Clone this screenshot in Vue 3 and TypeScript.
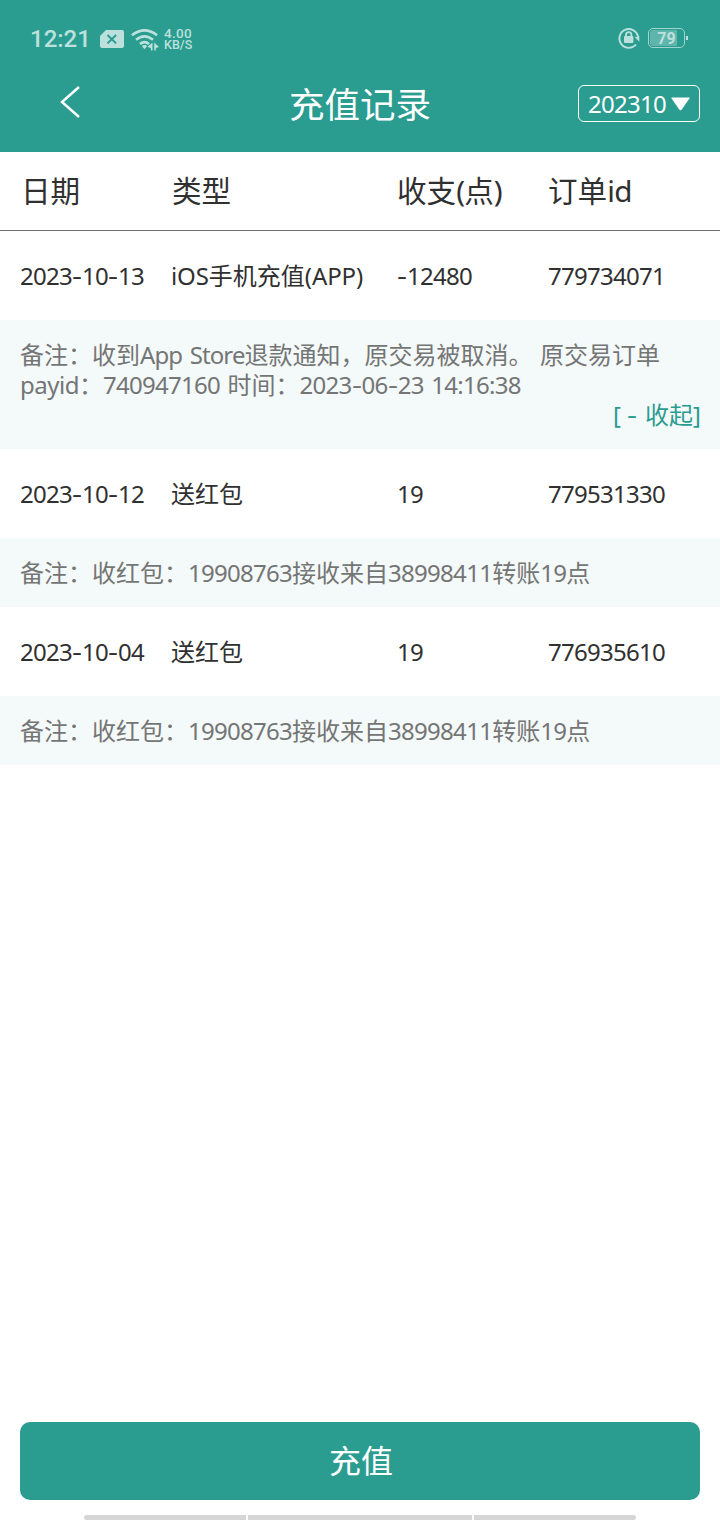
<script setup lang="ts">
import { h, type FunctionalComponent } from 'vue'

interface RecordItem {
  date: string
  type: string
  amount: string
  orderId: string
  note: string
  expanded: boolean
}

const columns: string[] = ['日期', '类型', '收支(点)', '订单id']

const records: RecordItem[] = [
  {
    date: '2023-10-13',
    type: 'iOS手机充值(APP)',
    amount: '-12480',
    orderId: '779734071',
    note: '备注：收到App Store退款通知，原交易被取消。 原交易订单payid：740947160 时间：2023-06-23 14:16:38',
    expanded: true,
  },
  {
    date: '2023-10-12',
    type: '送红包',
    amount: '19',
    orderId: '779531330',
    note: '备注：收红包：19908763接收来自38998411转账19点',
    expanded: false,
  },
  {
    date: '2023-10-04',
    type: '送红包',
    amount: '19',
    orderId: '776935610',
    note: '备注：收红包：19908763接收来自38998411转账19点',
    expanded: false,
  },
]

// Splits mixed text into runs so digits, dashes, Latin and Chinese get their own spacing
const MixedText: FunctionalComponent<{ text: string }> = (props) => {
  const runs = props.text.match(/[0-9:]+|-| +|[A-Za-z()]+|[^\x00-\x7f]+|./g) ?? []
  return runs.map((run) => {
    let kind = 'cjk'
    if (/^[0-9:]/.test(run)) kind = 'num'
    else if (run === '-') kind = 'dash'
    else if (/^ /.test(run)) kind = 'gap'
    else if (/^[a-z]+$/.test(run)) kind = 'lower'
    else if (/^[\x21-\x7e]/.test(run)) kind = 'latin'
    return h('span', { class: `run-${kind}` }, run)
  })
}
MixedText.props = ['text']
</script>

<template>
  <div class="screen">
    <header class="top">
      <div class="status">
        <span class="clock">12:21</span>
        <svg class="sim" width="24" height="18" viewBox="0 0 24 18">
          <path fill="#bce1dc" d="M6 0H22Q24 0 24 2V16Q24 18 22 18H2Q0 18 0 16V6Z" />
          <path d="M7.5 5l8.6 8.4M16.1 5l-8.6 8.4" stroke="#2a9c90" stroke-width="2" fill="none" />
        </svg>
        <svg class="wifi" width="28" height="22" viewBox="0 0 28 22">
          <g fill="none" stroke="#bce1dc" stroke-width="2.7">
            <path d="M1 6.3Q13.5-3.6 26 6.3" />
            <path d="M5 10.8Q13.5 3.9 22 10.8" />
            <path d="M9 15Q13.5 11.2 18 15" />
          </g>
          <path fill="#bce1dc" d="M10.8 17Q13.5 15 16.2 17L13.5 20.3ZM21.5 13.5v8h-1.6v-2.3l-3.4-1.4ZM23.2 13.5l4.8 4.4-3.2 1v2.6h-1.6Z" />
        </svg>
        <span class="speed"><span>4.00</span><span>KB/S</span></span>
        <span class="spacer"></span>
        <svg class="lock" width="22" height="22" viewBox="0 0 22 22">
          <path d="M18 17.5A9.4 9.4 0 1 1 20 9.5" fill="none" stroke="#bce1dc" stroke-width="1.9" />
          <path d="M16.8 10.2L21.3 9v5.8Z" fill="#bce1dc" />
          <rect x="6" y="9" width="9.4" height="7" rx="1" fill="#bce1dc" />
          <path d="M8 10V7.8a2.7 2.7 0 0 1 5.4 0v2.2" fill="none" stroke="#bce1dc" stroke-width="1.8" />
        </svg>
        <span class="battery"><span class="level"></span><span class="percent">79</span></span>
        <span class="terminal"></span>
      </div>
      <nav class="nav">
        <svg class="back" width="22" height="34" viewBox="0 0 22 34">
          <path d="M20 2L3 17L20 32" fill="none" stroke="#fff" stroke-width="2.4" />
        </svg>
        <h1 class="title">充值记录</h1>
        <button class="month" type="button">
          <MixedText text="202310" />
          <svg class="caret" width="19" height="14" viewBox="0 0 19 14"><path d="M1 .5H18Q19 .5 18.4 1.5L10.6 12.7Q9.5 14 8.4 12.7L.6 1.5Q0 .5 1 .5Z" fill="#fff" /></svg>
        </button>
      </nav>
    </header>

    <main class="list">
      <div class="grid head">
        <span v-for="name in columns" :key="name"><MixedText :text="name" /></span>
      </div>
      <section v-for="item in records" :key="item.orderId">
        <div class="grid row">
          <span><MixedText :text="item.date" /></span>
          <span class="kind"><MixedText :text="item.type" /></span>
          <span><MixedText :text="item.amount" /></span>
          <span><MixedText :text="item.orderId" /></span>
        </div>
        <div class="note">
          <p><MixedText :text="item.note" /></p>
          <a v-if="item.expanded" class="fold"><MixedText text="[ - 收起]" /></a>
        </div>
      </section>
    </main>

    <footer class="bottom">
      <button class="recharge" type="button">充值</button>
      <div class="gestures"><i></i><i class="wide"></i><i></i></div>
    </footer>
  </div>
</template>

<style>
body {
  margin: 0;
  background: #fff;
}
.run-num {
  letter-spacing: -0.72px;
}
.run-latin {
  letter-spacing: -0.9px;
}
.run-lower {
  letter-spacing: -0.5px;
}
.kind .run-latin {
  letter-spacing: -0.1px;
}
.run-dash {
  display: inline-block;
  width: 10px;
  text-align: center;
  transform: translateY(-1px) scaleX(1.3);
}
.run-gap {
  word-spacing: 1.3px;
}
</style>

<style scoped>
.screen {
  width: 720px;
  height: 1520px;
  display: flex;
  flex-direction: column;
  overflow: hidden;
  background: #fff;
  color: #303030;
  font-family: "Noto Sans", "Noto Sans CJK SC", sans-serif;
  font-size: 24px;
}
.top {
  height: 152px;
  flex: none;
  background: #2a9c90;
  color: #fff;
}
.status {
  height: 76px;
  padding: 0 32px 0 30px;
  box-sizing: border-box;
  display: flex;
  align-items: center;
  color: #bce1dc;
  font-family: Roboto, sans-serif;
  font-weight: 500;
}
.clock {
  width: 70px;
  line-height: 28px;
  padding-top: 2px;
}
.sim {
  margin-top: 2px;
}
.wifi {
  margin: 3px 0 0 7px;
}
.speed {
  margin: 2px 0 0 5px;
  display: flex;
  flex-direction: column;
  font-size: 13.5px;
  line-height: 12.5px;
}
.speed span:first-child {
  letter-spacing: 0.3px;
}
.speed span:last-child {
  font-size: 12.5px;
}
.spacer {
  flex: 1;
}
.lock {
  margin-right: 8px;
}
.battery {
  position: relative;
  width: 37px;
  height: 20px;
  box-sizing: border-box;
  border: 1.5px solid #a0d5ce;
  border-radius: 5px;
  padding: 1px;
  display: flex;
}
.level {
  width: 27px;
  border-radius: 3px 0 0 3px;
  background: #5fb5ab;
}
.percent {
  position: absolute;
  inset: 0;
  text-align: center;
  font-size: 16px;
  font-weight: 700;
  line-height: 19px;
}
.terminal {
  width: 2px;
  height: 4px;
  margin-left: 1px;
  background: #bce1dc;
}
.nav {
  height: 54px;
  display: grid;
  grid-template-columns: 1fr 144px 1fr;
  align-items: center;
}
.back {
  margin: -3px 0 0 59px;
}
.title {
  margin: 2px 0 0 1px;
  font-size: 35.5px;
  line-height: 52px;
  font-weight: 400;
  white-space: nowrap;
}
.month {
  justify-self: end;
  width: 122px;
  height: 37px;
  margin: 1px 20px 0 0;
  padding: 0 0 0 9px;
  box-sizing: border-box;
  display: flex;
  align-items: center;
  border: 1px solid #fff;
  border-radius: 6px;
  background: none;
  color: #fff;
  font: inherit;
  line-height: 35px;
}
.caret {
  margin-left: 5px;
}
.list {
  flex: 1;
}
.grid {
  padding: 0 20px;
  display: grid;
  grid-template-columns: 151px 226px 151px 1fr;
  align-items: center;
  white-space: nowrap;
}
.head {
  height: 78px;
  box-sizing: content-box;
  border-bottom: 1px solid #6e6e6e;
  font-size: 29.6px;
}
.head > span {
  margin-top: -4px;
}
.head > span:first-child,
.head > span:nth-child(2) {
  padding-left: 1px;
}
.row {
  height: 89px;
  line-height: 30px;
}
.note {
  padding: 20px 20px 19px;
  background: #f4f9f9;
  color: #747575;
  line-height: 30px;
}
.note p {
  margin: 0;
}
.fold {
  display: block;
  text-align: right;
  color: #2a9c90;
}
.bottom {
  height: 98px;
  display: flex;
  flex-direction: column;
  align-items: center;
}
.recharge {
  width: 680px;
  height: 78px;
  padding: 0 0 5px 2px;
  border: 0;
  border-radius: 10px;
  background: #2a9c90;
  color: #fff;
  font: inherit;
  font-size: 32px;
}
.gestures {
  margin-top: 15px;
  width: 552px;
  height: 5px;
  display: flex;
  gap: 2px;
}
.gestures i {
  flex: 162;
  background: #d6d6d6;
}
.gestures .wide {
  flex: 224;
}
.gestures i:first-child {
  border-radius: 3px 0 0 3px;
}
.gestures i:last-child {
  border-radius: 0 3px 3px 0;
}
</style>
